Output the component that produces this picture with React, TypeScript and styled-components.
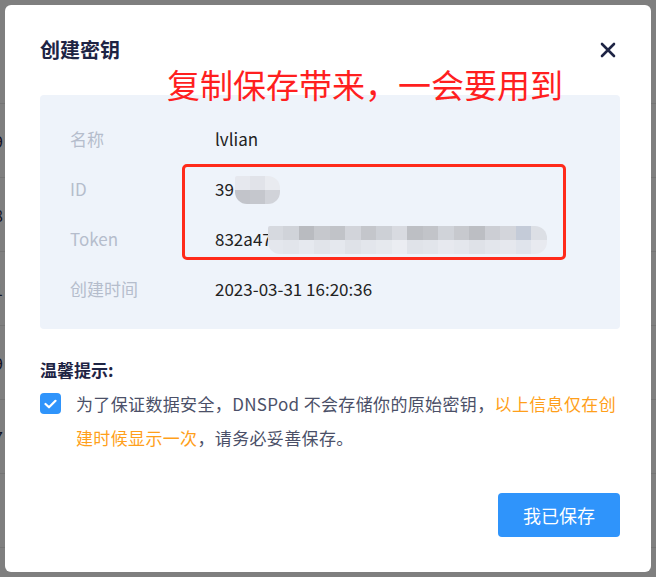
import React from 'react'
import styled, { createGlobalStyle } from 'styled-components'

const GlobalStyle = createGlobalStyle`
  html, body {
    margin: 0;
    padding: 0;
    background: #ffffff;
    font-family: "Noto Sans CJK SC", "Noto Sans", sans-serif;
  }
`

const Page = styled.div`
  width: 656px;
  height: 577px;
  overflow: hidden;
  position: relative;
  padding-top: 30px;
  box-sizing: border-box;
`
const BackRow = styled.div`
  height: 73px;
  border-bottom: 1px solid #e8e8e8;
  display: flex;
  align-items: center;
  margin-left: -6px;
  font-size: 16px;
  color: #1e2444;
`
const Overlay = styled.div`
  position: fixed;
  inset: 0;
  background: rgba(0, 0, 0, 0.5);
`
const Modal = styled.div`
  position: fixed;
  left: 5px;
  top: 5px;
  width: 646px;
  height: 567px;
  box-sizing: border-box;
  padding: 28px 31px 35px 35px;
  background: #fff;
  border-radius: 6px;
  display: flex;
  flex-direction: column;
`
const Header = styled.div`
  display: flex;
  align-items: center;
  justify-content: space-between;
  height: 34px;
  margin-bottom: 28px;
`
const Title = styled.h2`
  margin: 0;
  font-size: 20px;
  font-weight: 700;
  color: #1e2444;
  line-height: 34px;
`
const CloseButton = styled.button`
  border: none;
  background: none;
  padding: 0;
  margin-right: 4px;
  width: 16px;
  height: 16px;
  display: flex;
  cursor: pointer;
`
const Annotation = styled.div`
  position: absolute;
  left: 162px;
  top: 63px;
  font-size: 33px;
  line-height: 33px;
  color: #ff1f1f;
  white-space: nowrap;
`
const InfoBox = styled.div`
  position: relative;
  background: #eef3fa;
  border-radius: 4px;
  padding: 18px 30px 16px;
`
const InfoRow = styled.div`
  display: flex;
  align-items: center;
  height: 50px;
  font-size: 17px;
`
const Label = styled.span`
  width: 145px;
  color: #b5bdcc;
`
const Value = styled.span`
  color: #222;
  display: inline-flex;
  align-items: center;
`
const Mosaic = styled.span<{ $cols: number; $cell: number; $shift: number }>`
  display: inline-grid;
  grid-template-columns: repeat(${p => p.$cols}, ${p => p.$cell}px);
  grid-template-rows: 14px 14px;
  border-radius: 2px 12px 12px 12px;
  overflow: hidden;
  margin-top: 4px;
  margin-left: ${p => p.$shift}px;
`
const Cell = styled.span<{ $shade: string }>`
  background: ${p => p.$shade};
`
const Highlight = styled.div`
  position: absolute;
  left: 142px;
  top: 69px;
  width: 384px;
  height: 96px;
  box-sizing: border-box;
  border: 3px solid #ff2a1a;
  border-radius: 5px;
`
const TipTitle = styled.div`
  margin-top: 29px;
  font-size: 17px;
  line-height: 24px;
  font-weight: 700;
  color: #1e2444;
`
const TipRow = styled.div`
  display: flex;
  align-items: flex-start;
  gap: 15px;
  margin-top: 5px;
`
const CheckBox = styled.span`
  flex: none;
  width: 21px;
  height: 21px;
  margin-top: 6px;
  border-radius: 4px;
  background: #2f94fb;
  display: flex;
  align-items: center;
  justify-content: center;
`
const TipText = styled.p`
  margin: 0;
  font-size: 17px;
  line-height: 34px;
  letter-spacing: 0.35px;
  color: #4b5068;
`
const Warn = styled.span`
  color: #ff9f1a;
`
const Footer = styled.div`
  margin-top: auto;
  display: flex;
  justify-content: flex-end;
`
const SaveButton = styled.button`
  width: 122px;
  height: 44px;
  border: none;
  border-radius: 4px;
  background: #2f94fb;
  color: #fff;
  font-family: inherit;
  font-size: 18px;
  cursor: pointer;
`

const idTop = ['#e6e8ee', '#e1e3e9', '#e9ebf0']
const idBottom = ['#c2c4ca', '#c5c7cd', '#d1d3d9']
const tokenTop = ['#d6d9df', '#d0d3d9', '#b9bbc0', '#c6c8cd', '#c1c3c8', '#d2d4da', '#c4c6cb', '#cdd0d6', '#d8dae0', '#bdbfc4', '#c2c4c9', '#d0d3d9', '#c7c9ce', '#bcbec3', '#ccced4', '#d3d5db', '#c4cbd8', '#dcdfe5']
const tokenBottom = ['#e4e7ed', '#e2e5eb', '#e6e9ef', '#e1e4ea', '#e5e8ee', '#dfe2e8', '#e3e6ec', '#e6e9ee', '#ebedf2', '#e0e3e9', '#e2e5eb', '#e7e9ef', '#e4e7ed', '#dfe2e8', '#e3e6ec', '#e6e8ee', '#e0e4ec', '#e8eaf0']

function Blur ({ top, bottom, cell, shift }: { top: string[]; bottom: string[]; cell: number; shift: number }) {
  return (
    <Mosaic $cols={top.length} $cell={cell} $shift={shift}>
      {top.map((c, i) => <Cell key={'t' + i} $shade={c} />)}
      {bottom.map((c, i) => <Cell key={'b' + i} $shade={c} />)}
    </Mosaic>
  )
}

export default function App () {
  return (
    <Page>
      <GlobalStyle />
      {['', '9', '8', '1', '9', '7', ''].map((d, i) => <BackRow key={i}>{d}</BackRow>)}
      <Overlay />
      <Modal>
        <Header>
          <Title>创建密钥</Title>
          <CloseButton aria-label="close">
            <svg width="16" height="16" viewBox="0 0 16 16">
              <path d="M2 2 L14 14 M14 2 L2 14" stroke="#1e2444" strokeWidth="2.6" strokeLinecap="round" />
            </svg>
          </CloseButton>
        </Header>
        <InfoBox>
          <InfoRow><Label>名称</Label><Value>lvlian</Value></InfoRow>
          <InfoRow><Label>ID</Label><Value>39<Blur top={idTop} bottom={idBottom} cell={15} shift={1} /></Value></InfoRow>
          <InfoRow><Label>Token</Label><Value>832a47<Blur top={tokenTop} bottom={tokenBottom} cell={15.5} shift={-4} /></Value></InfoRow>
          <InfoRow><Label>创建时间</Label><Value>2023-03-31 16:20:36</Value></InfoRow>
          <Highlight />
        </InfoBox>
        <TipTitle>温馨提示:</TipTitle>
        <TipRow>
          <CheckBox>
            <svg width="13" height="10" viewBox="0 0 13 10">
              <path d="M1.5 5 L5 8.3 L11.5 1.8" fill="none" stroke="#fff" strokeWidth="2.2" strokeLinecap="round" strokeLinejoin="round" />
            </svg>
          </CheckBox>
          <TipText>
            为了保证数据安全，DNSPod 不会存储你的原始密钥，<Warn>以上信息仅在创建时候显示一次</Warn>，请务必妥善保存。
          </TipText>
        </TipRow>
        <Footer>
          <SaveButton>我已保存</SaveButton>
        </Footer>
        <Annotation>复制保存带来，一会要用到</Annotation>
      </Modal>
    </Page>
  )
}
